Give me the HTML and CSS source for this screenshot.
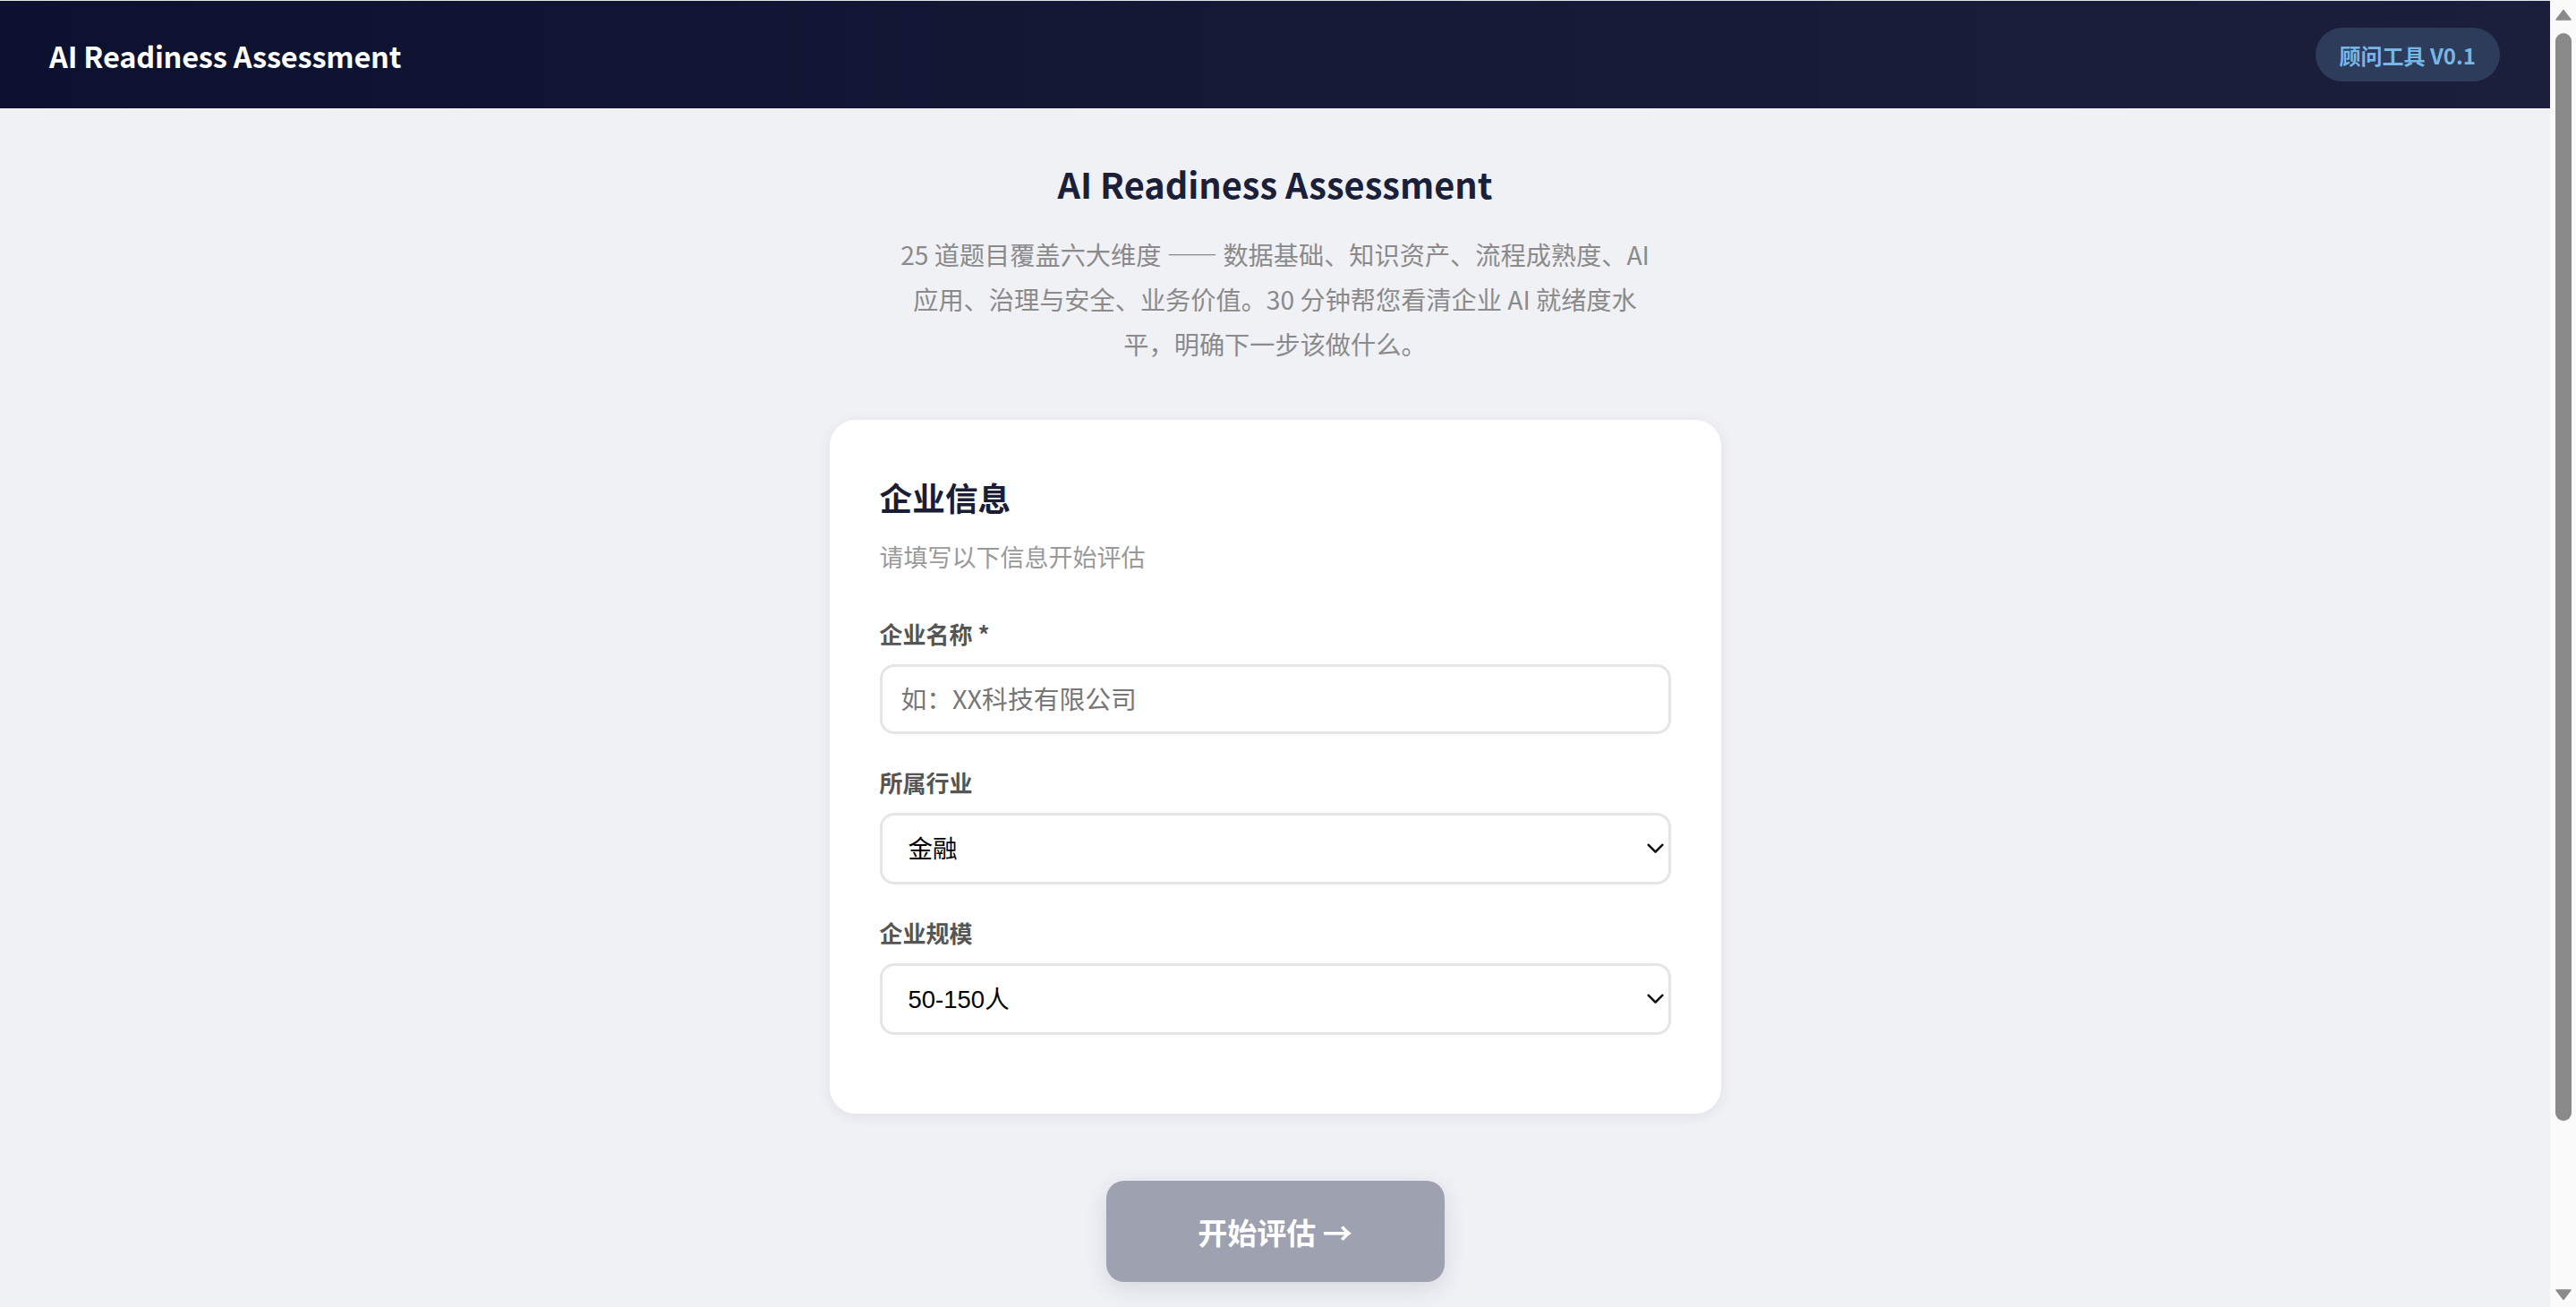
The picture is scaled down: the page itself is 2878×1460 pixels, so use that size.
FILE: index.html
```html
<!DOCTYPE html>
<html lang="zh-CN">
<head>
<meta charset="utf-8">
<title>AI Readiness Assessment</title>
<link rel="stylesheet" href="styles.css">
</head>
<body>
<header class="topbar">
  <div class="brand">AI Readiness Assessment</div>
  <div class="badge">顾问工具 V0.1</div>
</header>
<main class="main">
  <h1 class="hero-title">AI Readiness Assessment</h1>
  <p class="hero-desc">25 道题目覆盖六大维度 —— 数据基础、知识资产、流程成熟度、AI<br>应用、治理与安全、业务价值。30 分钟帮您看清企业 AI 就绪度水<br>平，明确下一步该做什么。</p>
  <section class="card">
    <h2 class="card-title">企业信息</h2>
    <p class="card-sub">请填写以下信息开始评估</p>
    <div class="field">
      <label class="label" for="company">企业名称 *</label>
      <input class="input" id="company" type="text" placeholder="如：XX科技有限公司">
    </div>
    <div class="field">
      <label class="label" for="industry">所属行业</label>
      <div class="select-wrap">
        <select class="select" id="industry">
          <option>金融</option>
          <option>制造</option>
          <option>零售</option>
        </select>
        <svg class="chevron" width="19" height="12" viewBox="0 0 19 12"><path d="M1.8 1.8 L9.5 9.6 L17.2 1.8" fill="none" stroke="#111" stroke-width="2.6" stroke-linecap="round" stroke-linejoin="round"/></svg>
      </div>
    </div>
    <div class="field">
      <label class="label" for="size">企业规模</label>
      <div class="select-wrap">
        <select class="select" id="size">
          <option>50-150人</option>
          <option>150-500人</option>
        </select>
        <svg class="chevron" width="19" height="12" viewBox="0 0 19 12"><path d="M1.8 1.8 L9.5 9.6 L17.2 1.8" fill="none" stroke="#111" stroke-width="2.6" stroke-linecap="round" stroke-linejoin="round"/></svg>
      </div>
    </div>
  </section>
  <button class="start-btn" type="button">开始评估 →</button>
</main>
<div class="scrollbar" aria-hidden="true">
  <svg class="sb-arrow" width="18" height="13" viewBox="0 0 18 13"><path d="M9 1.5 L17 12 L1 12 Z" fill="#8a8a8a" stroke="#8a8a8a" stroke-width="1.5" stroke-linejoin="round"/></svg>
  <div class="sb-track"><div class="sb-thumb"></div></div>
  <svg class="sb-arrow" width="18" height="13" viewBox="0 0 18 13"><path d="M1 1 L17 1 L9 11.5 Z" fill="#8a8a8a" stroke="#8a8a8a" stroke-width="1.5" stroke-linejoin="round"/></svg>
</div>
</body>
</html>
```
FILE: styles.css
```css
body {
  margin: 0 29px 0 0;
  background: #f0f1f5;
  font-family: "Noto Sans CJK SC", "Noto Sans", sans-serif;
  color: #1a1f3a;
}

/* simulated browser scrollbar (drawn over the page edge) */
.scrollbar {
  position: fixed;
  top: 0;
  right: 0;
  width: 29px;
  height: 100vh;
  background: #fafafa;
  display: flex;
  flex-direction: column;
  align-items: center;
  padding: 10px 0 7px;
  box-sizing: border-box;
}

.sb-arrow {
  flex: none;
  margin-left: 1px;
}

.sb-track {
  flex: 1;
  width: 100%;
  display: flex;
  justify-content: center;
  padding-top: 14px;
}

.sb-thumb {
  width: 18px;
  margin-left: 1px;
  height: 1215px;
  border-radius: 9px;
  background: #8a8a8a;
}

.topbar {
  height: 120px;
  border-top: 1px solid #e2e3e8;
  background: linear-gradient(90deg, #0c1130 0%, #141936 50%, #1c1f3c 100%);
  display: flex;
  align-items: center;
  justify-content: space-between;
  padding: 0 56px 0 55px;
}

.brand {
  color: #ffffff;
  font-size: 32.5px;
  font-weight: 700;
  letter-spacing: -0.2px;
}

.badge {
  height: 60px;
  padding: 0 27px;
  border-radius: 30px;
  background: #2e3c5b;
  color: #76b7e8;
  font-size: 24px;
  font-weight: 600;
  display: flex;
  align-items: center;
}

.main {
  display: flex;
  flex-direction: column;
  align-items: center;
  padding: 58px 0 250px;
}

.hero-title {
  margin: 0;
  font-size: 39.7px;
  line-height: 52px;
  font-weight: 700;
  color: #1a1f3a;
}

.hero-desc {
  margin: 28px 0 0;
  font-size: 28.2px;
  line-height: 50px;
  color: #8a8a8a;
  text-align: center;
  white-space: nowrap;
}

.card {
  margin-top: 60px;
  width: 996px;
  box-sizing: border-box;
  padding: 62px 56px 52px;
  background: #ffffff;
  border-radius: 29px;
  box-shadow: 0 3px 16px rgba(20, 25, 60, 0.07);
}

.card-title {
  margin: 0;
  font-size: 36.7px;
  line-height: 48px;
  font-weight: 700;
  color: #1a1d33;
}

.card-sub {
  margin: 25px 0 50px;
  font-size: 27px;
  line-height: 36px;
  color: #999999;
}

.field {
  display: flex;
  flex-direction: column;
  margin-bottom: 36px;
}

.label {
  font-size: 26px;
  line-height: 36px;
  font-weight: 700;
  color: #555555;
  margin-bottom: 16px;
}

.input {
  height: 78px;
  box-sizing: border-box;
  border: 3px solid #e5e5e7;
  border-radius: 16px;
  padding: 0 21px 4px;
  font-family: "Noto Sans CJK SC", sans-serif;
  font-size: 28.8px;
  color: #222;
  background: #fff;
  outline: none;
}

.input::placeholder {
  color: #777777;
}

.select-wrap {
  position: relative;
}

.select {
  width: 100%;
  height: 80px;
  box-sizing: border-box;
  border: 3px solid #e5e5e7;
  border-radius: 16px;
  padding: 0 60px 0 29px;
  font-family: "Liberation Sans", "Noto Sans CJK SC", sans-serif;
  font-size: 27.5px;
  color: #000000;
  background: #ffffff;
  -webkit-appearance: none;
  appearance: none;
  outline: none;
}

.chevron {
  position: absolute;
  right: 8px;
  top: 34px;
  pointer-events: none;
}

.start-btn {
  margin-top: 75px;
  width: 378px;
  height: 113px;
  border: none;
  border-radius: 20px;
  background: #9ea1b0;
  color: #ffffff;
  font-family: "Noto Sans CJK SC", sans-serif;
  font-size: 33px;
  font-weight: 700;
  box-shadow: 0 7px 26px rgba(30, 35, 70, 0.12);
  cursor: pointer;
}
```
